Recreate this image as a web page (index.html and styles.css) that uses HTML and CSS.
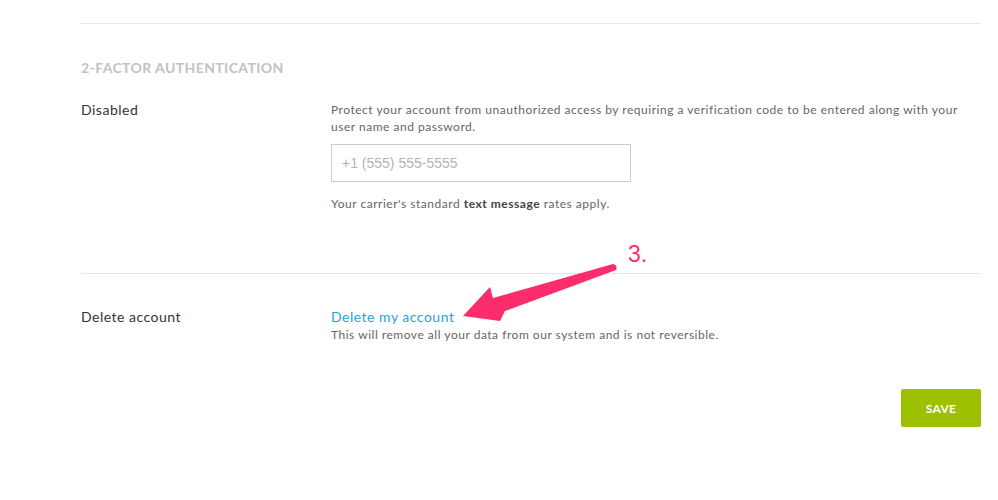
FILE: index.html
```html
<!DOCTYPE html>
<html lang="en">

<head>
    <meta charset="UTF-8">
    <title>Account settings</title>
    <link rel="stylesheet" href="styles.css">
</head>

<body>
    <div class="page">
        <div class="section">
            <h3 class="section-title">2-Factor Authentication</h3>
            <div class="row">
                <div class="label">Disabled</div>
                <div class="field">
                    <p class="help">Protect your account from unauthorized access by requiring a verification code to be entered along with your user name and password.</p>
                    <input class="phone" type="text" placeholder="+1 (555) 555-5555">
                    <p class="help note">Your carrier's standard <strong>text message</strong> rates apply.</p>
                </div>
            </div>
        </div>
        <div class="section delete">
            <div class="row">
                <div class="label">Delete account</div>
                <div class="field">
                    <a class="danger-link" href="#">Delete my account</a>
                    <p class="help">This will remove all your data from our system and is not reversible.</p>
                </div>
            </div>
        </div>
        <div class="actions">
            <button class="save-btn">Save</button>
        </div>

        <!-- annotation drawn over the page -->
        <span class="callout-num">3.</span>
        <svg class="callout-arrow" width="180" height="75" viewBox="0 0 180 75">
            <path d="M13 61 L40 32 L43 43 L163 9 Q168 10 166 15 L55 56 L50 66 Z" fill="#fd2c6c" />
        </svg>
    </div>
</body>

</html>
```

FILE: styles.css
```css
body {
    margin: 0;
    padding: 0;
    background: #fff;
    font-family: "Lato", "Open Sans", sans-serif;
    color: #333;
}

.page {
    position: relative;
    width: 900px;
    margin-left: 81px;
    padding-top: 23px;
}

.section {
    border-top: 1px solid #e5e5e5;
}

.section-title {
    margin: 35px 0 0;
    font-size: 14px;
    font-weight: 700;
    letter-spacing: 0.4px;
    text-transform: uppercase;
    color: #c2c2c2;
}

.row {
    display: flex;
    margin-top: 25px;
    padding-bottom: 61px;
}

.label {
    width: 250px;
    font-size: 14px;
    letter-spacing: 0.5px;
    line-height: 18px;
    color: #333;
}

.field {
    flex: 1;
}

.help {
    margin: 0;
    font-size: 12px;
    line-height: 17px;
    letter-spacing: 0.52px;
    color: #666;
}

.help strong {
    color: #444;
}

.phone {
    display: block;
    width: 300px;
    height: 38px;
    box-sizing: border-box;
    margin: 9px 0 13px;
    padding: 0 10px;
    border: 1px solid #ccc;
    border-radius: 0;
    font-family: "Liberation Sans", Arial, sans-serif;
    font-size: 14px;
    color: #333;
}

.phone::placeholder {
    color: #b3b3b3;
}

.delete .row {
    margin-top: 34px;
    padding-bottom: 0;
}

.danger-link {
    display: block;
    font-size: 14px;
    line-height: 18px;
    letter-spacing: 0.5px;
    color: #2a9fd8;
    text-decoration: none;
}

.actions {
    display: flex;
    justify-content: flex-end;
    margin-top: 46px;
}

.save-btn {
    width: 80px;
    height: 38px;
    border: none;
    border-radius: 2px;
    background: #9dc000;
    color: #fff;
    font-family: "Lato", sans-serif;
    font-size: 12px;
    font-weight: 700;
    letter-spacing: 0.3px;
    text-transform: uppercase;
    cursor: pointer;
}

.callout-num {
    position: absolute;
    left: 547px;
    top: 241px;
    font-family: "Liberation Sans", Arial, sans-serif;
    font-size: 23px;
    color: #fd2c6c;
}

.callout-arrow {
    position: absolute;
    left: 369px;
    top: 255px;
}
```
